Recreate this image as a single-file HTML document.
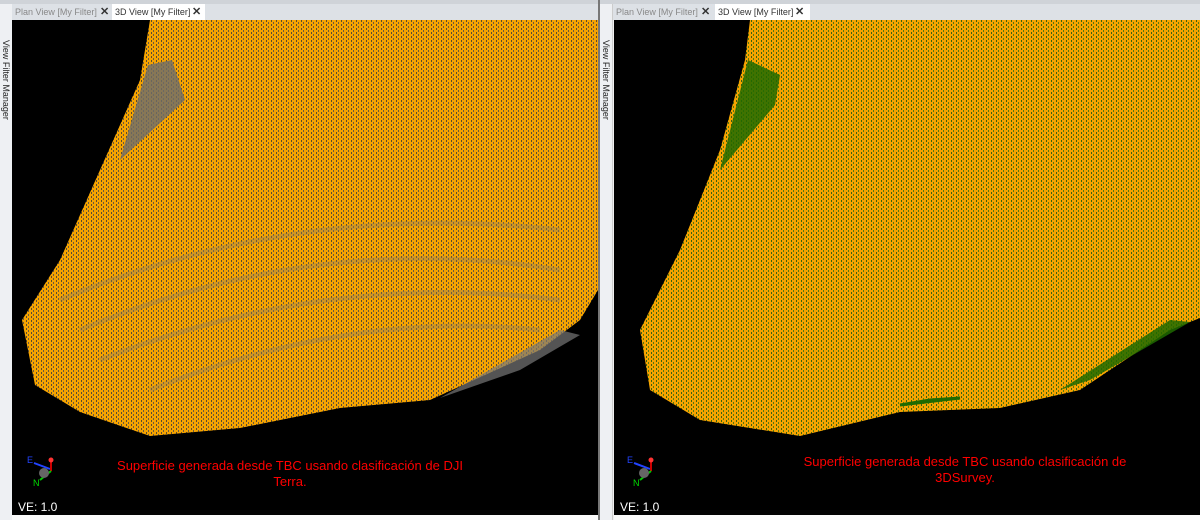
<!DOCTYPE html>
<html><head><meta charset="utf-8"><style>
body{margin:0;width:1200px;height:520px;background:#f0f0f0;overflow:hidden;position:relative;font-family:"Liberation Sans",sans-serif}
.side{position:absolute;top:4px;width:12px;height:516px;background:#eef0f3;border-right:1px solid #ccc}
.side span{position:absolute;top:36px;left:1px;writing-mode:vertical-rl;font-size:9px;color:#222}
.tabs{position:absolute;top:4px;height:16px;background:#dde1e6;font-size:9px;color:#888}
.tab{position:absolute;top:0;height:16px;line-height:17px;padding-left:3px}
.tab b{position:absolute;font-size:11px;color:#333}
.vp{position:absolute;top:20px;height:495px;background:#000;overflow:hidden}
.cap{position:absolute;color:#f00;font-size:13px;text-align:center;line-height:16px}
.ve{position:absolute;color:#fff;font-size:12px}
.bot{position:absolute;top:515px;height:5px;background:#fafafa}
</style></head><body>
<div style="position:absolute;top:0;left:0;width:1200px;height:4px;background:#cfd3d8"></div>
<div class="side" style="left:0"><span>View Filter Manager</span></div>
<div class="tabs" style="left:12px;width:586px">
 <div class="tab" style="left:0;width:100px">Plan View [My Filter]<b style="left:88px">✕</b></div>
 <div class="tab" style="left:100px;width:90px;background:#fff;color:#333">3D View [My Filter]<b style="left:80px">✕</b></div>
</div>
<div style="position:absolute;left:598px;top:0;width:2px;height:520px;background:#777"></div>
<div class="side" style="left:600px"><span>View Filter Manager</span></div>
<div class="tabs" style="left:613px;width:587px">
 <div class="tab" style="left:0;width:98px">Plan View [My Filter]<b style="left:88px">✕</b></div>
 <div class="tab" style="left:102px;width:92px;background:#fff;color:#333">3D View [My Filter]<b style="left:80px">✕</b></div>
</div>
<svg class="vp" style="left:12px;width:586px" viewBox="12 20 586 495">
<defs><pattern id="g" width="5" height="4" patternUnits="userSpaceOnUse"><rect width="5" height="4" fill="#f5a300"/><rect x="1" y="0" width="1" height="2" fill="#5a4a30"/><rect x="3" y="2" width="1" height="2" fill="#6a5a40"/></pattern></defs>
<polygon points="150,20 598,20 598,290 580,320 540,350 430,400 340,408 240,428 150,436 80,412 35,385 22,320 60,260 100,170 140,80" fill="url(#g)"/>
<polygon points="148,65 172,60 185,100 120,160" fill="#6b6b6b" opacity=".8"/>
<polygon points="440,398 560,330 580,335 520,370" fill="#777" opacity=".7"/>
<path d="M60 300 Q300 200 560 230 M80 330 Q320 230 560 270 M100 360 Q330 270 560 300 M150 390 Q350 310 540 330" stroke="#8a7a60" stroke-width="5" fill="none" opacity=".35"/>
</svg>
<svg class="vp" style="left:614px;width:586px" viewBox="614 20 586 495">
<defs><pattern id="h" width="5" height="4" patternUnits="userSpaceOnUse"><rect width="5" height="4" fill="#f5a300"/><rect x="1" y="0" width="1" height="2" fill="#3d6010"/><rect x="3" y="2" width="1" height="2" fill="#557a10"/></pattern></defs>
<polygon points="750,20 1200,20 1200,318 1170,330 1080,390 1000,408 900,412 800,436 700,420 650,390 640,330 680,250 720,150 745,60" fill="url(#h)"/>
<polygon points="748,60 780,75 775,105 720,170" fill="#1e6a00" opacity=".85"/>
<polygon points="1060,390 1170,320 1190,322 1090,380" fill="#1e6a00" opacity=".85"/>
<polygon points="900,405 960,398 930,400" fill="#1e6a00" stroke="#1e6a00" stroke-width="3"/>
</svg>
<svg style="position:absolute;left:26px;top:455px" width="34" height="36"><line x1="8" y1="8" x2="24" y2="14" stroke="#2244ff" stroke-width="2"/><line x1="25" y1="6" x2="25" y2="16" stroke="#c00" stroke-width="2"/><circle cx="25" cy="5" r="2.5" fill="#f33"/><line x1="25" y1="16" x2="14" y2="25" stroke="#0c0" stroke-width="2"/><circle cx="18" cy="18" r="5" fill="#666"/><text x="1" y="8" font-size="9" fill="#2244ff">E</text><text x="7" y="31" font-size="9" fill="#0d0">N</text></svg>
<svg style="position:absolute;left:626px;top:455px" width="34" height="36"><line x1="8" y1="8" x2="24" y2="14" stroke="#2244ff" stroke-width="2"/><line x1="25" y1="6" x2="25" y2="16" stroke="#c00" stroke-width="2"/><circle cx="25" cy="5" r="2.5" fill="#f33"/><line x1="25" y1="16" x2="14" y2="25" stroke="#0c0" stroke-width="2"/><circle cx="18" cy="18" r="5" fill="#666"/><text x="1" y="8" font-size="9" fill="#2244ff">E</text><text x="7" y="31" font-size="9" fill="#0d0">N</text></svg>
<div class="cap" style="left:90px;width:400px;top:458px">Superficie generada desde TBC usando clasificación de DJI<br>Terra.</div>
<div class="cap" style="left:765px;width:400px;top:454px">Superficie generada desde TBC usando clasificación de<br>3DSurvey.</div>
<div class="ve" style="left:18px;top:500px">VE: 1.0</div>
<div class="ve" style="left:620px;top:500px">VE: 1.0</div>
<div class="bot" style="left:12px;width:586px"></div>
<div class="bot" style="left:614px;width:586px"></div>
</body></html>
